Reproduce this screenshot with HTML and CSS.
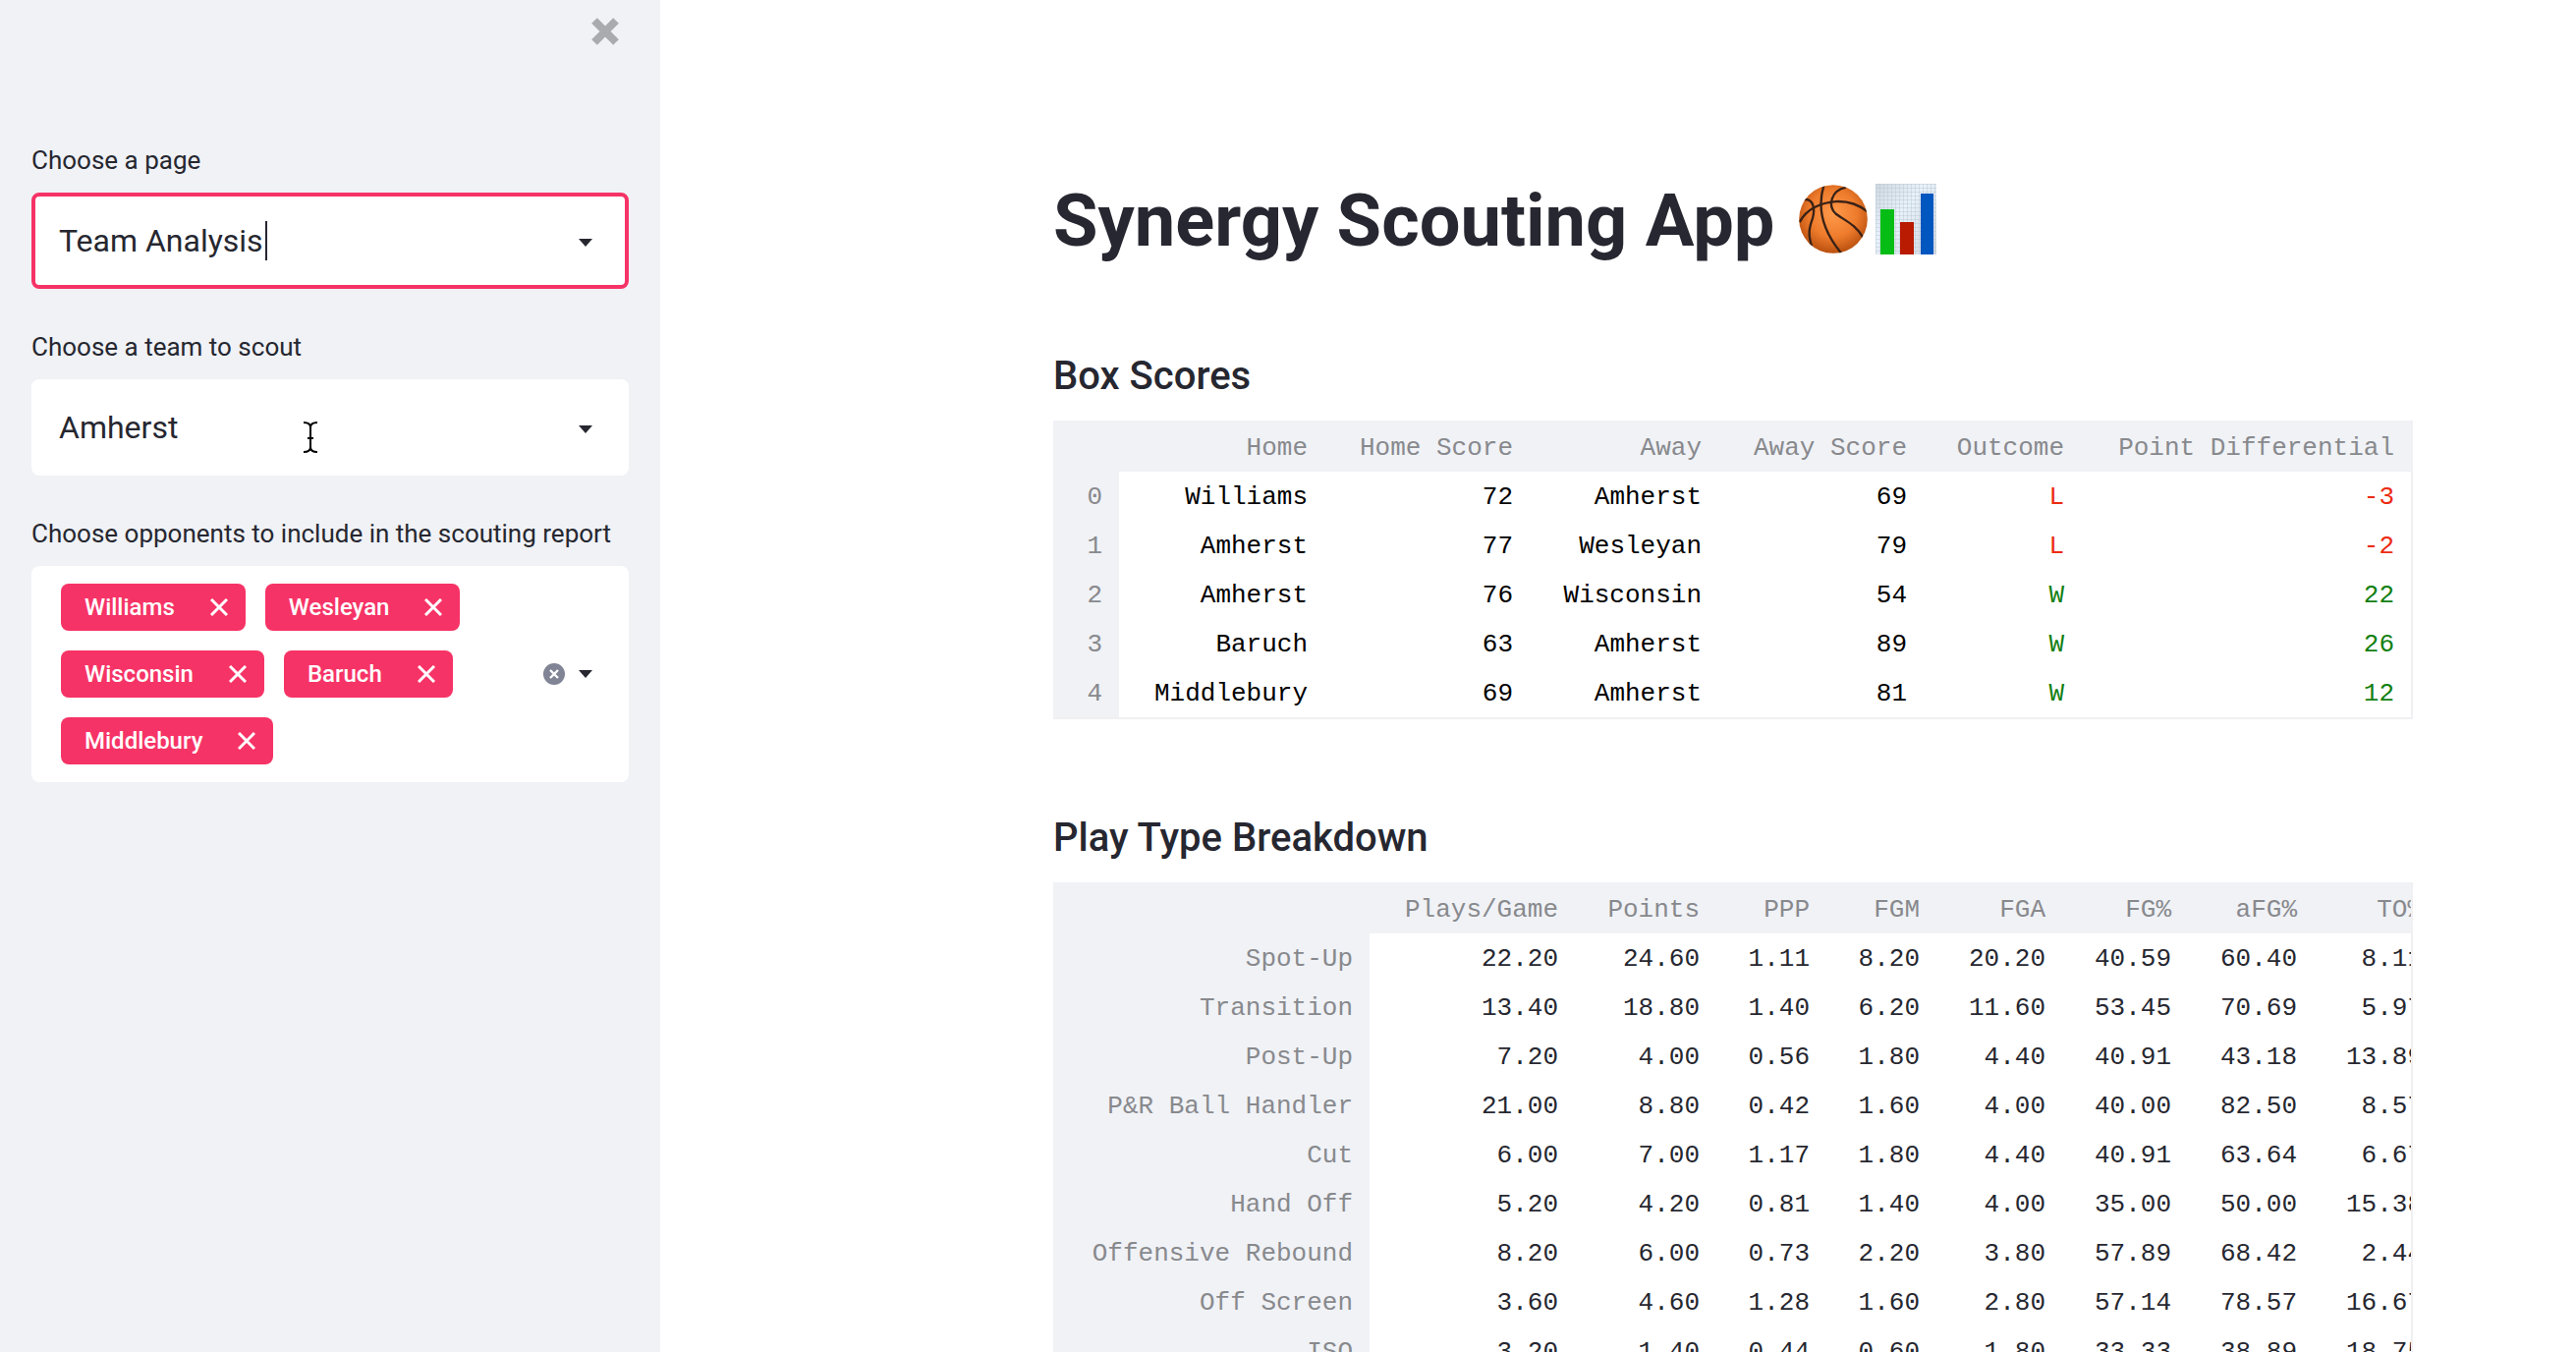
FILE: index.html
```html
<!DOCTYPE html>
<html lang="en">
<head>
  <meta charset="utf-8">
  <meta name="viewport" content="width=device-width, initial-scale=1">
  <title>Synergy Scouting App</title>
  <link rel="stylesheet" href="styles.css">
</head>
<body>
<div class="app">
  <aside class="sidebar">
    <header class="sidebar-top">
      <button type="button" class="close" aria-label="Close sidebar">
        <svg width="28" height="28" viewBox="0 0 28 28"><path d="M3 3l22 22M25 3L3 25" stroke="#a9abaf" stroke-width="8"/></svg>
      </button>
    </header>

    <div class="field">
      <label for="page">Choose a page</label>
      <div class="select focused">
        <select id="page"><option>Team Analysis</option></select>
        <span class="text-caret"></span>
        <svg class="arrow" width="14" height="8" viewBox="0 0 14 8"><path d="M0 0h14L7 8z" fill="#262730"/></svg>
      </div>
    </div>

    <div class="field">
      <label for="team">Choose a team to scout</label>
      <div class="select">
        <select id="team"><option>Amherst</option></select>
        <svg class="arrow" width="14" height="8" viewBox="0 0 14 8"><path d="M0 0h14L7 8z" fill="#262730"/></svg>
        <svg class="pointer" width="16" height="34" viewBox="0 0 16 34" fill="none" stroke="#000" stroke-width="2"><path d="M1 2c4 0 7 1 7 5v20c0 4-3 5-7 5M15 2c-4 0-7 1-7 5M8 27c0 4 3 5 7 5M5 18h6"/></svg>
      </div>
    </div>

    <div class="field">
      <span class="label" id="opponents">Choose opponents to include in the scouting report</span>
      <div class="multi" role="group" aria-labelledby="opponents">
        <div class="tags">
          <button type="button" class="tag">Williams<svg class="x" viewBox="0 0 18 18"><path d="M1 1l16 16M17 1L1 17"/></svg></button>
          <button type="button" class="tag">Wesleyan<svg class="x" viewBox="0 0 18 18"><path d="M1 1l16 16M17 1L1 17"/></svg></button>
          <button type="button" class="tag">Wisconsin<svg class="x" viewBox="0 0 18 18"><path d="M1 1l16 16M17 1L1 17"/></svg></button>
          <button type="button" class="tag">Baruch<svg class="x" viewBox="0 0 18 18"><path d="M1 1l16 16M17 1L1 17"/></svg></button>
          <button type="button" class="tag">Middlebury<svg class="x" viewBox="0 0 18 18"><path d="M1 1l16 16M17 1L1 17"/></svg></button>
        </div>
        <button type="button" class="icon-button" aria-label="Clear all">
          <svg width="22" height="22" viewBox="0 0 22 22"><circle cx="11" cy="11" r="11" fill="#808495"/><path d="M7 7l8 8M15 7l-8 8" stroke="#fff" stroke-width="2.4"/></svg>
        </button>
        <button type="button" class="icon-button" aria-label="Open list">
          <svg width="14" height="8" viewBox="0 0 14 8"><path d="M0 0h14L7 8z" fill="#262730"/></svg>
        </button>
      </div>
    </div>
  </aside>

  <main class="main">
    <h1>
      <span>Synergy Scouting App</span>
      <span class="emoji">
        <svg width="70" height="70" viewBox="33 54 209 209" role="img" aria-label="Basketball">
          <defs>
            <radialGradient id="ball" cx="50%" cy="42%" r="58%"><stop offset="0" stop-color="#ff9a4b"/><stop offset="0.6" stop-color="#ee7b2c"/><stop offset="1" stop-color="#b9500f"/></radialGradient>
            <clipPath id="round"><circle cx="137.500" cy="158.500" r="104"/></clipPath>
          </defs>
          <circle cx="137.500" cy="158.500" r="104" fill="url(#ball)"/>
          <g clip-path="url(#round)" fill="none" stroke="#3a2216" stroke-width="7">
            <path d="M35 168C55 128 100 108 145 105C185 103 215 115 240 135"/>
            <path d="M109 55C92 110 94 180 162 262"/>
            <path d="M50 99C78 96 82 130 75 155C64 185 60 205 72 240"/>
            <path d="M176 62C130 72 120 118 145 142C175 165 202 172 228 214"/>
          </g>
        </svg>
        <svg width="62" height="72" viewBox="0 0 62 72" role="img" aria-label="Bar chart">
          <defs>
            <linearGradient id="paper" x1="0" y1="0" x2="1" y2="1"><stop offset="0" stop-color="#cfd8df"/><stop offset="0.4" stop-color="#e9f2fa"/><stop offset="1" stop-color="#d3d8e0"/></linearGradient>
            <pattern id="grid" width="4" height="4" patternUnits="userSpaceOnUse"><path d="M0 0H4M0 0V4" stroke="#b9cad6" stroke-width="1"/></pattern>
          </defs>
          <rect width="62" height="72" fill="url(#paper)"/>
          <rect width="62" height="72" fill="url(#grid)"/>
          <rect x="5" y="26" width="14" height="46" fill="#06bd16"/>
          <rect x="25" y="39" width="14" height="33" fill="#b81a02"/>
          <rect x="46" y="10" width="13" height="62" fill="#0256bf"/>
        </svg>
      </span>
    </h1>

    <section>
      <h2>Box Scores</h2>
      <div class="frame">
        <table class="scores">
          <colgroup><col class="w-index"><col class="w-209"><col class="w-209"><col class="w-192"><col class="w-209"><col class="w-160"><col></colgroup>
          <thead><tr><td></td><th>Home</th><th>Home Score</th><th>Away</th><th>Away Score</th><th>Outcome</th><th>Point Differential</th></tr></thead>
          <tbody>
            <tr><th>0</th><td>Williams</td><td>72</td><td>Amherst</td><td>69</td><td class="loss">L</td><td class="loss">-3</td></tr>
            <tr><th>1</th><td>Amherst</td><td>77</td><td>Wesleyan</td><td>79</td><td class="loss">L</td><td class="loss">-2</td></tr>
            <tr><th>2</th><td>Amherst</td><td>76</td><td>Wisconsin</td><td>54</td><td class="win">W</td><td class="win">22</td></tr>
            <tr><th>3</th><td>Baruch</td><td>63</td><td>Amherst</td><td>89</td><td class="win">W</td><td class="win">26</td></tr>
            <tr><th>4</th><td>Middlebury</td><td>69</td><td>Amherst</td><td>81</td><td class="win">W</td><td class="win">12</td></tr>
          </tbody>
        </table>
      </div>
    </section>

    <section>
      <h2>Play Type Breakdown</h2>
      <div class="frame">
        <table class="plays">
          <colgroup><col class="w-name"><col class="w-209"><col class="w-144"><col class="w-112"><col class="w-112"><col class="w-128"><col class="w-128"><col class="w-128"><col class="w-128"></colgroup>
          <thead><tr><td></td><th>Plays/Game</th><th>Points</th><th>PPP</th><th>FGM</th><th>FGA</th><th>FG%</th><th>aFG%</th><th>TO%</th></tr></thead>
          <tbody>
            <tr><th>Spot-Up</th><td>22.20</td><td>24.60</td><td>1.11</td><td>8.20</td><td>20.20</td><td>40.59</td><td>60.40</td><td>8.11</td></tr>
            <tr><th>Transition</th><td>13.40</td><td>18.80</td><td>1.40</td><td>6.20</td><td>11.60</td><td>53.45</td><td>70.69</td><td>5.97</td></tr>
            <tr><th>Post-Up</th><td>7.20</td><td>4.00</td><td>0.56</td><td>1.80</td><td>4.40</td><td>40.91</td><td>43.18</td><td>13.89</td></tr>
            <tr><th>P&amp;R Ball Handler</th><td>21.00</td><td>8.80</td><td>0.42</td><td>1.60</td><td>4.00</td><td>40.00</td><td>82.50</td><td>8.57</td></tr>
            <tr><th>Cut</th><td>6.00</td><td>7.00</td><td>1.17</td><td>1.80</td><td>4.40</td><td>40.91</td><td>63.64</td><td>6.67</td></tr>
            <tr><th>Hand Off</th><td>5.20</td><td>4.20</td><td>0.81</td><td>1.40</td><td>4.00</td><td>35.00</td><td>50.00</td><td>15.38</td></tr>
            <tr><th>Offensive Rebound</th><td>8.20</td><td>6.00</td><td>0.73</td><td>2.20</td><td>3.80</td><td>57.89</td><td>68.42</td><td>2.44</td></tr>
            <tr><th>Off Screen</th><td>3.60</td><td>4.60</td><td>1.28</td><td>1.60</td><td>2.80</td><td>57.14</td><td>78.57</td><td>16.67</td></tr>
            <tr><th>ISO</th><td>3.20</td><td>1.40</td><td>0.44</td><td>0.60</td><td>1.80</td><td>33.33</td><td>38.89</td><td>18.75</td></tr>
          </tbody>
        </table>
      </div>
    </section>
  </main>
</div>
</body>
</html>
```
FILE: styles.css
```css
* {
  box-sizing: border-box;
}

body {
  margin: 0;
  background: #fff;
  color: #262730;
  font-family: Roboto, "Liberation Sans", sans-serif;
}

button {
  padding: 0;
  border: 0;
  background: none;
  font: inherit;
  cursor: pointer;
}

svg {
  display: block;
  flex: none;
}

.app {
  display: flex;
  height: 100vh;
  overflow: hidden;
}

/* Sidebar */
.sidebar {
  flex: none;
  width: 672px;
  padding: 0 32px;
  background: #f0f2f6;
}

.sidebar-top {
  display: flex;
  justify-content: flex-end;
  height: 144px;
  padding: 18px 10px 0 0;
}

.close {
  height: 28px;
}

.field {
  display: flex;
  flex-direction: column;
  gap: 14px;
  margin-bottom: 40px;
}

.field label,
.label {
  font-size: 26px;
  line-height: 38px;
}

.select {
  position: relative;
  height: 98px;
}

.select select {
  width: 100%;
  height: 100%;
  padding: 0 64px 0 28px;
  border: 0;
  border-radius: 8px;
  outline: 0;
  background: #fff;
  color: inherit;
  font: inherit;
  font-size: 32px;
  appearance: none;
}

.focused select {
  padding: 0 60px 0 24px;
  border: 4px solid #f63366;
}

.arrow {
  position: absolute;
  top: 47px;
  right: 37px;
  pointer-events: none;
}

.text-caret {
  position: absolute;
  top: 29px;
  left: 238px;
  width: 2px;
  height: 40px;
  background: #262730;
}

.pointer {
  position: absolute;
  top: 42px;
  left: 276px;
}

.multi {
  display: flex;
  align-items: center;
  gap: 14px;
  padding: 18px 37px 18px 30px;
  border-radius: 8px;
  background: #fff;
}

.tags {
  display: flex;
  flex: 1;
  flex-wrap: wrap;
  gap: 20px;
}

.tag {
  display: flex;
  align-items: center;
  gap: 36px;
  height: 48px;
  padding: 0 18px 0 24px;
  border-radius: 8px;
  background: #f63366;
  color: #fff;
  font-size: 24px;
  font-weight: 500;
}

.x {
  width: 18px;
  height: 18px;
  fill: none;
  stroke: #fff;
  stroke-width: 3;
}

/* Report */
.main {
  flex: 1;
  min-width: 0;
  padding: 180px 166px 0 400px;
}

h1 {
  display: flex;
  align-items: center;
  gap: 24px;
  margin: 0 0 88px;
  font-size: 74px;
  font-weight: 700;
  line-height: 90px;
}

.emoji {
  display: flex;
  align-items: center;
  gap: 8px;
  padding-bottom: 4px;
}

h2 {
  margin: 0 0 20px;
  font-size: 40px;
  font-weight: 500;
  line-height: 50px;
}

section {
  margin-bottom: 96px;
}

.frame {
  overflow: hidden;
  border: solid #f0f0f2;
  border-width: 0 2px 2px 0;
}

table {
  width: 100%;
  border-spacing: 0;
  table-layout: fixed;
  font-family: "Liberation Mono", monospace;
  font-size: 26px;
  line-height: 30px;
}

.plays {
  width: 1411px;
}

.scores {
  color: #000;
}

th,
td {
  height: 50px;
  padding: 2px 17px 0 0;
  font-weight: 400;
  text-align: right;
  white-space: nowrap;
}

thead th,
thead td {
  height: 52px;
  padding-top: 4px;
}

th,
thead td {
  background: #f0f2f6;
  color: #88898d;
}

.loss {
  color: #ec2b12;
}

.win {
  color: #128012;
}

.w-index { width: 67px; }
.w-name { width: 322px; }
.w-112 { width: 112px; }
.w-128 { width: 128px; }
.w-144 { width: 144px; }
.w-160 { width: 160px; }
.w-192 { width: 192px; }
.w-209 { width: 209px; }
```
